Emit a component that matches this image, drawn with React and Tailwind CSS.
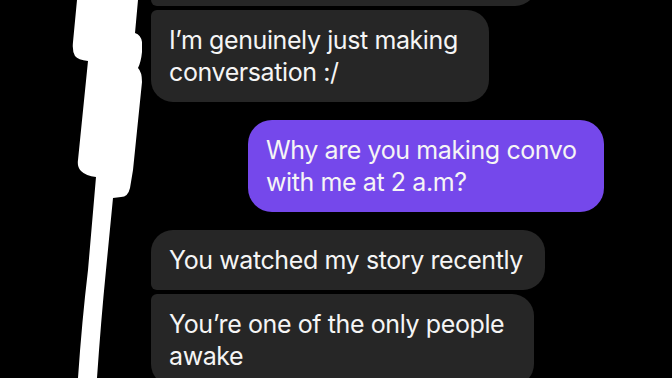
import React from "react";

const Scribble = () => (
  <svg
    className="pointer-events-none absolute left-0 top-0"
    width="672"
    height="378"
    viewBox="0 0 672 378"
  >
    <path
      fill="#ffffff"
      d="M77 0 L138 0 L135 33 Q141 35 142 42 L142 52 Q141 62 138 68 Q142 72 142 82 L133 170 L130 188 Q128 197 121 197 L113 198 L106 270 Q101 320 97 378 L78 378 Q82 320 88 270 L96 177 Q86 176 81 171 Q77 167 78 160 L88 61 Q78 60 75 56 Q72 51 73 42 Z"
    />
  </svg>
);

const Bubble = ({ text, className }) => (
  <div
    className={`whitespace-nowrap px-[18px] py-[14px] text-[25px] leading-[32px] tracking-[-0.4px] text-[#f5f5f5] ${className}`}
  >
    {text}
  </div>
);

export default function App() {
  return (
    <div
      className="relative h-[378px] w-[672px] overflow-hidden bg-black"
      style={{ fontFamily: "Inter, 'Noto Sans', sans-serif" }}
    >
      <div className="ml-[151px] flex w-[453px] flex-col">
        <div className="mt-[-54px] h-[60px] w-[386px] rounded-[22px] rounded-bl-[6px] bg-[#262626]" />
        <Bubble
          className="mt-[4px] w-[338px] rounded-[22px] rounded-tl-[6px] bg-[#262626]"
          text={
            <>
              I’m genuinely just making
              <br />
              conversation :/
            </>
          }
        />
        <div className="mt-[18px] flex justify-end">
          <Bubble
            className="w-[356px] rounded-[24px] bg-[#7548eb]"
            text={
              <>
                Why are you making convo
                <br />
                with me at 2 a.m?
              </>
            }
          />
        </div>
        <Bubble
          className="mt-[18px] w-[394px] rounded-[22px] rounded-bl-[6px] bg-[#262626]"
          text="You watched my story recently"
        />
        <Bubble
          className="mt-[4px] w-[383px] rounded-[22px] rounded-tl-[6px] bg-[#262626]"
          text={
            <>
              You’re one of the only people
              <br />
              awake
            </>
          }
        />
      </div>
      <Scribble />
    </div>
  );
}
